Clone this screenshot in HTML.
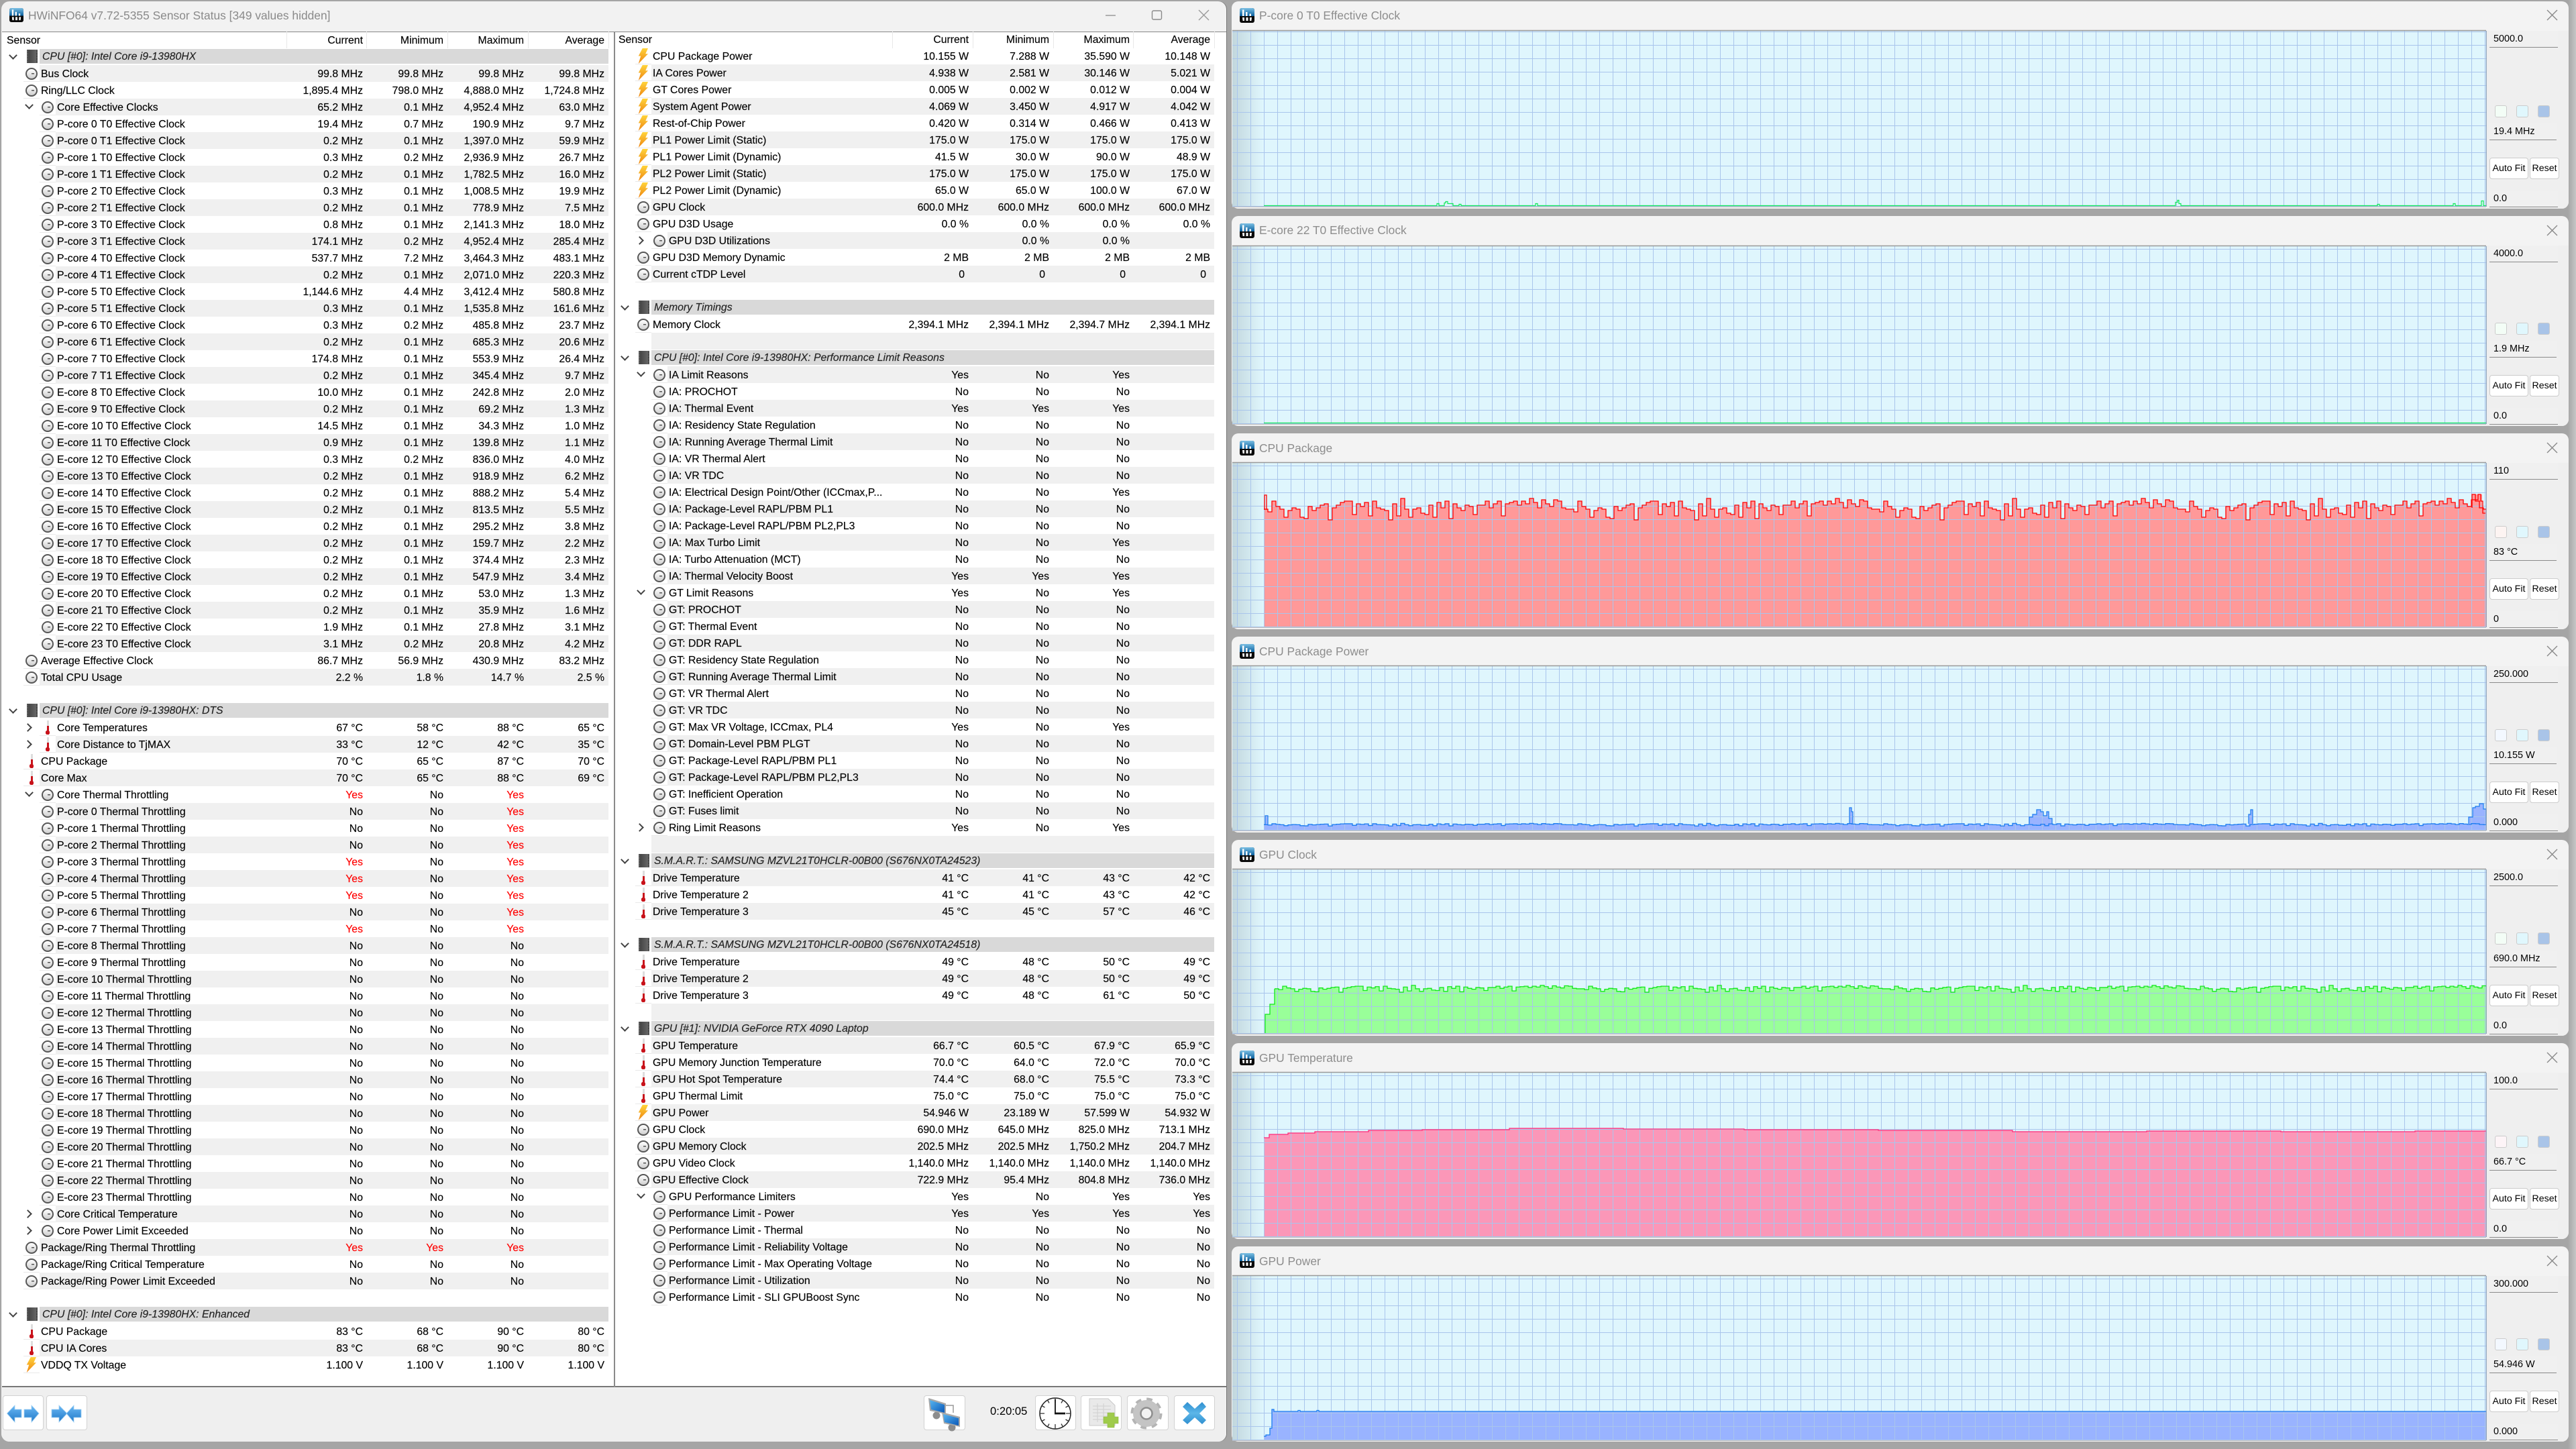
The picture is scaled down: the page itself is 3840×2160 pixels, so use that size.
<!DOCTYPE html>
<html><head><meta charset="utf-8"><title>HWiNFO64 Sensor Status</title>
<style>
html,body{margin:0;padding:0}
body{width:3840px;height:2160px;overflow:hidden;position:relative;background:linear-gradient(90deg,#a5a5a5 0,#a5a5a5 3828px,#c6c6c6 3840px);font:15.8px "Liberation Sans",sans-serif;color:#000}
.a{position:absolute}
#m{left:2px;top:2px;width:1826px;height:2147px;background:#f2f2f2;border-radius:12px;box-shadow:1px 0 0 #777}
#ls{left:3px;top:47px;width:1825px;height:2021px;background:#fff;border-top:1px solid #888;border-bottom:2px solid #777;box-sizing:border-box}
#bb{left:2px;top:2069px;width:1826px;height:80px;background:#efefef;border-radius:0 0 12px 12px}
.tt{position:absolute;font-size:17.4px;color:#8a8a8a;line-height:24px;white-space:nowrap}
.hh{position:absolute;width:100px;text-align:right;top:49px;line-height:24px;-webkit-text-stroke:.15px #000}
.sep{position:absolute;top:47px;height:25px;width:1px;background:#e8e8e8}
.p{position:absolute;-webkit-text-stroke:.15px currentColor}
.p p{margin:0;height:25px;position:relative;line-height:25px;white-space:nowrap}
.p p::before{content:"";position:absolute;left:59px;right:0;top:0;bottom:0}
.p p.l::before{left:83px}
.p p:nth-child(even)::before{background:#f0f0f0}
.p p.g::before{background:#d9d9d9;top:1px;bottom:2px}
.p b{font-weight:normal;position:absolute;left:61px;top:1px}
.p .l b{left:85px}
.p .g b{font-style:italic;left:63px;color:#222;top:0}
.p u{text-decoration:none;position:absolute;top:1px}
.p u:nth-of-type(1){right:366px}.p u:nth-of-type(2){right:246px}.p u:nth-of-type(3){right:126px}.p u:nth-of-type(4){right:6px}
.p u.y{color:#f00}
.c,.t,.o{background:linear-gradient(#e9e9e9,#e9e9e9) 35px 100%/24px 1px no-repeat}
.l.c,.l.t{background-position:59px 100%}
p.c::after,p.t::after,p.o::after,p.g::after{content:"";position:absolute}
p.c::after{left:38px;top:4px;width:14px;height:14px;border:2px solid #575757;border-radius:50%;background:linear-gradient(#555,#555) 7px 6px/4px 1.5px no-repeat,linear-gradient(#fff,#cfcfcf)}
p.l.c::after{left:62px}
p.t::after{left:44px;top:2px;width:6px;height:21px;background:radial-gradient(circle at 3px 18px,#c8131b 3px,transparent 3.5px),linear-gradient(#ddd 0,#ddd 8px,#c8131b 8px) 1.5px 0/3px 100% no-repeat}
p.l.t::after{left:68px}
p.o::after{left:39px;top:1px;width:15px;height:23px;clip-path:polygon(45% 0,100% 0,75% 36%,100% 36%,5% 100%,28% 50%,5% 50%);background:linear-gradient(#ffd43c,#ee8410)}
p.g::after{left:40px;top:2px;width:12px;height:20px;background:linear-gradient(90deg,#444,#666);border-left:2px dotted #555;border-right:2px dotted #555}
.p i{position:absolute;width:7px;height:7px;border-right:2.5px solid #444;border-bottom:2.5px solid #444}
i.d{left:39px;top:5px;transform:rotate(45deg)}
.g i.d{left:15px;top:6px}
i.r{left:37px;top:8px;transform:rotate(-45deg)}
.bt{position:absolute;top:2080px;height:52px;background:#fff;border:1px solid #d2d2d2;border-radius:4px;box-sizing:border-box}
.w{position:absolute;left:1836px;width:1993px;background:#f3f3f3;border-radius:10px;overflow:hidden}
.w .tt{left:41px;color:#8d8d8d}
.k{position:absolute;left:1871px;right:0;top:44px;bottom:0;background:#efefef;z-index:3}
.f{position:absolute;left:4px;width:102px;height:25px;background:#f0f0f0;border-bottom:1.5px solid #8a8a8a;box-sizing:border-box;font-size:14.4px;line-height:24px;padding-left:6px;white-space:nowrap}
.fv{width:100px}
.sw{position:absolute;width:18px;height:18px;border:1px solid #ccc;border-radius:3px;box-sizing:border-box}
.b1{position:absolute;height:32px;background:#fff;border:1px solid #ccc;border-radius:4px;box-sizing:border-box;font-size:14.2px;line-height:31px;text-align:center}
svg{position:absolute;left:0;top:0;z-index:2}
</style></head>
<body>
<div class="a" id="m"></div>
<div class="a" id="ls"></div>
<div class="a" id="bb"></div>
<div class="tt" style="left:42px;top:11px">HWiNFO64 v7.72-5355 Sensor Status [349 values hidden]</div>

<div class="hh" style="left:10px;text-align:left;width:auto">Sensor</div>
<div class="hh" style="left:441px">Current</div><div class="hh" style="left:561px">Minimum</div><div class="hh" style="left:681px">Maximum</div><div class="hh" style="left:801px">Average</div>
<div class="sep" style="left:427px"></div><div class="sep" style="left:546px"></div><div class="sep" style="left:667px"></div><div class="sep" style="left:787px"></div><div class="sep" style="left:907px"></div>
<div class="hh" style="left:922px;width:auto;text-align:left;top:48px">Sensor</div>
<div class="hh" style="left:1344px;top:48px">Current</div><div class="hh" style="left:1464px;top:48px">Minimum</div><div class="hh" style="left:1584px;top:48px">Maximum</div><div class="hh" style="left:1704px;top:48px">Average</div>
<div class="sep" style="left:1330px"></div><div class="sep" style="left:1450px"></div><div class="sep" style="left:1570px"></div><div class="sep" style="left:1689px"></div><div class="sep" style="left:1810px"></div>
<div class="a" style="left:915px;top:47px;width:2px;height:2021px;background:#8a8a8a"></div>

<div class="p" style="left:0;top:72px;width:907px">
<p class="g"><i class="d"></i><b>CPU [#0]: Intel Core i9-13980HX</b></p>
<p class="c"><b>Bus Clock</b><u>99.8 MHz</u><u>99.8 MHz</u><u>99.8 MHz</u><u>99.8 MHz</u></p>
<p class="c"><b>Ring/LLC Clock</b><u>1,895.4 MHz</u><u>798.0 MHz</u><u>4,888.0 MHz</u><u>1,724.8 MHz</u></p>
<p class="c l"><i class="d"></i><b>Core Effective Clocks</b><u>65.2 MHz</u><u>0.1 MHz</u><u>4,952.4 MHz</u><u>63.0 MHz</u></p>
<p class="c l"><b>P-core 0 T0 Effective Clock</b><u>19.4 MHz</u><u>0.7 MHz</u><u>190.9 MHz</u><u>9.7 MHz</u></p>
<p class="c l"><b>P-core 0 T1 Effective Clock</b><u>0.2 MHz</u><u>0.1 MHz</u><u>1,397.0 MHz</u><u>59.9 MHz</u></p>
<p class="c l"><b>P-core 1 T0 Effective Clock</b><u>0.3 MHz</u><u>0.2 MHz</u><u>2,936.9 MHz</u><u>26.7 MHz</u></p>
<p class="c l"><b>P-core 1 T1 Effective Clock</b><u>0.2 MHz</u><u>0.1 MHz</u><u>1,782.5 MHz</u><u>16.0 MHz</u></p>
<p class="c l"><b>P-core 2 T0 Effective Clock</b><u>0.3 MHz</u><u>0.1 MHz</u><u>1,008.5 MHz</u><u>19.9 MHz</u></p>
<p class="c l"><b>P-core 2 T1 Effective Clock</b><u>0.2 MHz</u><u>0.1 MHz</u><u>778.9 MHz</u><u>7.5 MHz</u></p>
<p class="c l"><b>P-core 3 T0 Effective Clock</b><u>0.8 MHz</u><u>0.1 MHz</u><u>2,141.3 MHz</u><u>18.0 MHz</u></p>
<p class="c l"><b>P-core 3 T1 Effective Clock</b><u>174.1 MHz</u><u>0.2 MHz</u><u>4,952.4 MHz</u><u>285.4 MHz</u></p>
<p class="c l"><b>P-core 4 T0 Effective Clock</b><u>537.7 MHz</u><u>7.2 MHz</u><u>3,464.3 MHz</u><u>483.1 MHz</u></p>
<p class="c l"><b>P-core 4 T1 Effective Clock</b><u>0.2 MHz</u><u>0.1 MHz</u><u>2,071.0 MHz</u><u>220.3 MHz</u></p>
<p class="c l"><b>P-core 5 T0 Effective Clock</b><u>1,144.6 MHz</u><u>4.4 MHz</u><u>3,412.4 MHz</u><u>580.8 MHz</u></p>
<p class="c l"><b>P-core 5 T1 Effective Clock</b><u>0.3 MHz</u><u>0.1 MHz</u><u>1,535.8 MHz</u><u>161.6 MHz</u></p>
<p class="c l"><b>P-core 6 T0 Effective Clock</b><u>0.3 MHz</u><u>0.2 MHz</u><u>485.8 MHz</u><u>23.7 MHz</u></p>
<p class="c l"><b>P-core 6 T1 Effective Clock</b><u>0.2 MHz</u><u>0.1 MHz</u><u>685.3 MHz</u><u>20.6 MHz</u></p>
<p class="c l"><b>P-core 7 T0 Effective Clock</b><u>174.8 MHz</u><u>0.1 MHz</u><u>553.9 MHz</u><u>26.4 MHz</u></p>
<p class="c l"><b>P-core 7 T1 Effective Clock</b><u>0.2 MHz</u><u>0.1 MHz</u><u>345.4 MHz</u><u>9.7 MHz</u></p>
<p class="c l"><b>E-core 8 T0 Effective Clock</b><u>10.0 MHz</u><u>0.1 MHz</u><u>242.8 MHz</u><u>2.0 MHz</u></p>
<p class="c l"><b>E-core 9 T0 Effective Clock</b><u>0.2 MHz</u><u>0.1 MHz</u><u>69.2 MHz</u><u>1.3 MHz</u></p>
<p class="c l"><b>E-core 10 T0 Effective Clock</b><u>14.5 MHz</u><u>0.1 MHz</u><u>34.3 MHz</u><u>1.0 MHz</u></p>
<p class="c l"><b>E-core 11 T0 Effective Clock</b><u>0.9 MHz</u><u>0.1 MHz</u><u>139.8 MHz</u><u>1.1 MHz</u></p>
<p class="c l"><b>E-core 12 T0 Effective Clock</b><u>0.3 MHz</u><u>0.2 MHz</u><u>836.0 MHz</u><u>4.0 MHz</u></p>
<p class="c l"><b>E-core 13 T0 Effective Clock</b><u>0.2 MHz</u><u>0.1 MHz</u><u>918.9 MHz</u><u>6.2 MHz</u></p>
<p class="c l"><b>E-core 14 T0 Effective Clock</b><u>0.2 MHz</u><u>0.1 MHz</u><u>888.2 MHz</u><u>5.4 MHz</u></p>
<p class="c l"><b>E-core 15 T0 Effective Clock</b><u>0.2 MHz</u><u>0.1 MHz</u><u>813.5 MHz</u><u>5.5 MHz</u></p>
<p class="c l"><b>E-core 16 T0 Effective Clock</b><u>0.2 MHz</u><u>0.1 MHz</u><u>295.2 MHz</u><u>3.8 MHz</u></p>
<p class="c l"><b>E-core 17 T0 Effective Clock</b><u>0.2 MHz</u><u>0.1 MHz</u><u>159.7 MHz</u><u>2.2 MHz</u></p>
<p class="c l"><b>E-core 18 T0 Effective Clock</b><u>0.2 MHz</u><u>0.1 MHz</u><u>374.4 MHz</u><u>2.3 MHz</u></p>
<p class="c l"><b>E-core 19 T0 Effective Clock</b><u>0.2 MHz</u><u>0.1 MHz</u><u>547.9 MHz</u><u>3.4 MHz</u></p>
<p class="c l"><b>E-core 20 T0 Effective Clock</b><u>0.2 MHz</u><u>0.1 MHz</u><u>53.0 MHz</u><u>1.3 MHz</u></p>
<p class="c l"><b>E-core 21 T0 Effective Clock</b><u>0.2 MHz</u><u>0.1 MHz</u><u>35.9 MHz</u><u>1.6 MHz</u></p>
<p class="c l"><b>E-core 22 T0 Effective Clock</b><u>1.9 MHz</u><u>0.1 MHz</u><u>27.8 MHz</u><u>3.1 MHz</u></p>
<p class="c l"><b>E-core 23 T0 Effective Clock</b><u>3.1 MHz</u><u>0.2 MHz</u><u>20.8 MHz</u><u>4.2 MHz</u></p>
<p class="c"><b>Average Effective Clock</b><u>86.7 MHz</u><u>56.9 MHz</u><u>430.9 MHz</u><u>83.2 MHz</u></p>
<p class="c"><b>Total CPU Usage</b><u>2.2 %</u><u>1.8 %</u><u>14.7 %</u><u>2.5 %</u></p>
<p></p>
<p class="g"><i class="d"></i><b>CPU [#0]: Intel Core i9-13980HX: DTS</b></p>
<p class="t l"><i class="r"></i><b>Core Temperatures</b><u>67 °C</u><u>58 °C</u><u>88 °C</u><u>65 °C</u></p>
<p class="t l"><i class="r"></i><b>Core Distance to TjMAX</b><u>33 °C</u><u>12 °C</u><u>42 °C</u><u>35 °C</u></p>
<p class="t"><b>CPU Package</b><u>70 °C</u><u>65 °C</u><u>87 °C</u><u>70 °C</u></p>
<p class="t"><b>Core Max</b><u>70 °C</u><u>65 °C</u><u>88 °C</u><u>69 °C</u></p>
<p class="c l"><i class="d"></i><b>Core Thermal Throttling</b><u class="y">Yes</u><u>No</u><u class="y">Yes</u></p>
<p class="c l"><b>P-core 0 Thermal Throttling</b><u>No</u><u>No</u><u class="y">Yes</u></p>
<p class="c l"><b>P-core 1 Thermal Throttling</b><u>No</u><u>No</u><u class="y">Yes</u></p>
<p class="c l"><b>P-core 2 Thermal Throttling</b><u>No</u><u>No</u><u class="y">Yes</u></p>
<p class="c l"><b>P-core 3 Thermal Throttling</b><u class="y">Yes</u><u>No</u><u class="y">Yes</u></p>
<p class="c l"><b>P-core 4 Thermal Throttling</b><u class="y">Yes</u><u>No</u><u class="y">Yes</u></p>
<p class="c l"><b>P-core 5 Thermal Throttling</b><u class="y">Yes</u><u>No</u><u class="y">Yes</u></p>
<p class="c l"><b>P-core 6 Thermal Throttling</b><u>No</u><u>No</u><u class="y">Yes</u></p>
<p class="c l"><b>P-core 7 Thermal Throttling</b><u class="y">Yes</u><u>No</u><u class="y">Yes</u></p>
<p class="c l"><b>E-core 8 Thermal Throttling</b><u>No</u><u>No</u><u>No</u></p>
<p class="c l"><b>E-core 9 Thermal Throttling</b><u>No</u><u>No</u><u>No</u></p>
<p class="c l"><b>E-core 10 Thermal Throttling</b><u>No</u><u>No</u><u>No</u></p>
<p class="c l"><b>E-core 11 Thermal Throttling</b><u>No</u><u>No</u><u>No</u></p>
<p class="c l"><b>E-core 12 Thermal Throttling</b><u>No</u><u>No</u><u>No</u></p>
<p class="c l"><b>E-core 13 Thermal Throttling</b><u>No</u><u>No</u><u>No</u></p>
<p class="c l"><b>E-core 14 Thermal Throttling</b><u>No</u><u>No</u><u>No</u></p>
<p class="c l"><b>E-core 15 Thermal Throttling</b><u>No</u><u>No</u><u>No</u></p>
<p class="c l"><b>E-core 16 Thermal Throttling</b><u>No</u><u>No</u><u>No</u></p>
<p class="c l"><b>E-core 17 Thermal Throttling</b><u>No</u><u>No</u><u>No</u></p>
<p class="c l"><b>E-core 18 Thermal Throttling</b><u>No</u><u>No</u><u>No</u></p>
<p class="c l"><b>E-core 19 Thermal Throttling</b><u>No</u><u>No</u><u>No</u></p>
<p class="c l"><b>E-core 20 Thermal Throttling</b><u>No</u><u>No</u><u>No</u></p>
<p class="c l"><b>E-core 21 Thermal Throttling</b><u>No</u><u>No</u><u>No</u></p>
<p class="c l"><b>E-core 22 Thermal Throttling</b><u>No</u><u>No</u><u>No</u></p>
<p class="c l"><b>E-core 23 Thermal Throttling</b><u>No</u><u>No</u><u>No</u></p>
<p class="c l"><i class="r"></i><b>Core Critical Temperature</b><u>No</u><u>No</u><u>No</u></p>
<p class="c l"><i class="r"></i><b>Core Power Limit Exceeded</b><u>No</u><u>No</u><u>No</u></p>
<p class="c"><b>Package/Ring Thermal Throttling</b><u class="y">Yes</u><u class="y">Yes</u><u class="y">Yes</u></p>
<p class="c"><b>Package/Ring Critical Temperature</b><u>No</u><u>No</u><u>No</u></p>
<p class="c"><b>Package/Ring Power Limit Exceeded</b><u>No</u><u>No</u><u>No</u></p>
<p></p>
<p class="g"><i class="d"></i><b>CPU [#0]: Intel Core i9-13980HX: Enhanced</b></p>
<p class="t"><b>CPU Package</b><u>83 °C</u><u>68 °C</u><u>90 °C</u><u>80 °C</u></p>
<p class="t"><b>CPU IA Cores</b><u>83 °C</u><u>68 °C</u><u>90 °C</u><u>80 °C</u></p>
<p class="o"><b>VDDQ TX Voltage</b><u>1.100 V</u><u>1.100 V</u><u>1.100 V</u><u>1.100 V</u></p>
</div>

<div class="p" style="left:912px;top:71px;width:898px">
<p class="o"><b>CPU Package Power</b><u>10.155 W</u><u>7.288 W</u><u>35.590 W</u><u>10.148 W</u></p>
<p class="o"><b>IA Cores Power</b><u>4.938 W</u><u>2.581 W</u><u>30.146 W</u><u>5.021 W</u></p>
<p class="o"><b>GT Cores Power</b><u>0.005 W</u><u>0.002 W</u><u>0.012 W</u><u>0.004 W</u></p>
<p class="o"><b>System Agent Power</b><u>4.069 W</u><u>3.450 W</u><u>4.917 W</u><u>4.042 W</u></p>
<p class="o"><b>Rest-of-Chip Power</b><u>0.420 W</u><u>0.314 W</u><u>0.466 W</u><u>0.413 W</u></p>
<p class="o"><b>PL1 Power Limit (Static)</b><u>175.0 W</u><u>175.0 W</u><u>175.0 W</u><u>175.0 W</u></p>
<p class="o"><b>PL1 Power Limit (Dynamic)</b><u>41.5 W</u><u>30.0 W</u><u>90.0 W</u><u>48.9 W</u></p>
<p class="o"><b>PL2 Power Limit (Static)</b><u>175.0 W</u><u>175.0 W</u><u>175.0 W</u><u>175.0 W</u></p>
<p class="o"><b>PL2 Power Limit (Dynamic)</b><u>65.0 W</u><u>65.0 W</u><u>100.0 W</u><u>67.0 W</u></p>
<p class="c"><b>GPU Clock</b><u>600.0 MHz</u><u>600.0 MHz</u><u>600.0 MHz</u><u>600.0 MHz</u></p>
<p class="c"><b>GPU D3D Usage</b><u>0.0 %</u><u>0.0 %</u><u>0.0 %</u><u>0.0 %</u></p>
<p class="c l"><i class="r"></i><b>GPU D3D Utilizations</b><u></u><u>0.0 %</u><u>0.0 %</u></p>
<p class="c"><b>GPU D3D Memory Dynamic</b><u>2 MB</u><u>2 MB</u><u>2 MB</u><u>2 MB</u></p>
<p class="c"><b>Current cTDP Level</b><u style="right:372px">0</u><u style="right:252px">0</u><u style="right:132px">0</u><u style="right:12px">0</u></p>
<p></p>
<p class="g"><i class="d"></i><b>Memory Timings</b></p>
<p class="c"><b>Memory Clock</b><u>2,394.1 MHz</u><u>2,394.1 MHz</u><u>2,394.7 MHz</u><u>2,394.1 MHz</u></p>
<p></p>
<p class="g"><i class="d"></i><b>CPU [#0]: Intel Core i9-13980HX: Performance Limit Reasons</b></p>
<p class="c l"><i class="d"></i><b>IA Limit Reasons</b><u>Yes</u><u>No</u><u>Yes</u></p>
<p class="c l"><b>IA: PROCHOT</b><u>No</u><u>No</u><u>No</u></p>
<p class="c l"><b>IA: Thermal Event</b><u>Yes</u><u>Yes</u><u>Yes</u></p>
<p class="c l"><b>IA: Residency State Regulation</b><u>No</u><u>No</u><u>No</u></p>
<p class="c l"><b>IA: Running Average Thermal Limit</b><u>No</u><u>No</u><u>No</u></p>
<p class="c l"><b>IA: VR Thermal Alert</b><u>No</u><u>No</u><u>No</u></p>
<p class="c l"><b>IA: VR TDC</b><u>No</u><u>No</u><u>No</u></p>
<p class="c l"><b>IA: Electrical Design Point/Other (ICCmax,P...</b><u>No</u><u>No</u><u>Yes</u></p>
<p class="c l"><b>IA: Package-Level RAPL/PBM PL1</b><u>No</u><u>No</u><u>No</u></p>
<p class="c l"><b>IA: Package-Level RAPL/PBM PL2,PL3</b><u>No</u><u>No</u><u>No</u></p>
<p class="c l"><b>IA: Max Turbo Limit</b><u>No</u><u>No</u><u>Yes</u></p>
<p class="c l"><b>IA: Turbo Attenuation (MCT)</b><u>No</u><u>No</u><u>No</u></p>
<p class="c l"><b>IA: Thermal Velocity Boost</b><u>Yes</u><u>Yes</u><u>Yes</u></p>
<p class="c l"><i class="d"></i><b>GT Limit Reasons</b><u>Yes</u><u>No</u><u>Yes</u></p>
<p class="c l"><b>GT: PROCHOT</b><u>No</u><u>No</u><u>No</u></p>
<p class="c l"><b>GT: Thermal Event</b><u>No</u><u>No</u><u>No</u></p>
<p class="c l"><b>GT: DDR RAPL</b><u>No</u><u>No</u><u>No</u></p>
<p class="c l"><b>GT: Residency State Regulation</b><u>No</u><u>No</u><u>No</u></p>
<p class="c l"><b>GT: Running Average Thermal Limit</b><u>No</u><u>No</u><u>No</u></p>
<p class="c l"><b>GT: VR Thermal Alert</b><u>No</u><u>No</u><u>No</u></p>
<p class="c l"><b>GT: VR TDC</b><u>No</u><u>No</u><u>No</u></p>
<p class="c l"><b>GT: Max VR Voltage, ICCmax, PL4</b><u>Yes</u><u>No</u><u>Yes</u></p>
<p class="c l"><b>GT: Domain-Level PBM PLGT</b><u>No</u><u>No</u><u>No</u></p>
<p class="c l"><b>GT: Package-Level RAPL/PBM PL1</b><u>No</u><u>No</u><u>No</u></p>
<p class="c l"><b>GT: Package-Level RAPL/PBM PL2,PL3</b><u>No</u><u>No</u><u>No</u></p>
<p class="c l"><b>GT: Inefficient Operation</b><u>No</u><u>No</u><u>No</u></p>
<p class="c l"><b>GT: Fuses limit</b><u>No</u><u>No</u><u>No</u></p>
<p class="c l"><i class="r"></i><b>Ring Limit Reasons</b><u>Yes</u><u>No</u><u>Yes</u></p>
<p></p>
<p class="g"><i class="d"></i><b>S.M.A.R.T.: SAMSUNG MZVL21T0HCLR-00B00 (S676NX0TA24523)</b></p>
<p class="t"><b>Drive Temperature</b><u>41 °C</u><u>41 °C</u><u>43 °C</u><u>42 °C</u></p>
<p class="t"><b>Drive Temperature 2</b><u>41 °C</u><u>41 °C</u><u>43 °C</u><u>42 °C</u></p>
<p class="t"><b>Drive Temperature 3</b><u>45 °C</u><u>45 °C</u><u>57 °C</u><u>46 °C</u></p>
<p></p>
<p class="g"><i class="d"></i><b>S.M.A.R.T.: SAMSUNG MZVL21T0HCLR-00B00 (S676NX0TA24518)</b></p>
<p class="t"><b>Drive Temperature</b><u>49 °C</u><u>48 °C</u><u>50 °C</u><u>49 °C</u></p>
<p class="t"><b>Drive Temperature 2</b><u>49 °C</u><u>48 °C</u><u>50 °C</u><u>49 °C</u></p>
<p class="t"><b>Drive Temperature 3</b><u>49 °C</u><u>48 °C</u><u>61 °C</u><u>50 °C</u></p>
<p></p>
<p class="g"><i class="d"></i><b>GPU [#1]: NVIDIA GeForce RTX 4090 Laptop</b></p>
<p class="t"><b>GPU Temperature</b><u>66.7 °C</u><u>60.5 °C</u><u>67.9 °C</u><u>65.9 °C</u></p>
<p class="t"><b>GPU Memory Junction Temperature</b><u>70.0 °C</u><u>64.0 °C</u><u>72.0 °C</u><u>70.0 °C</u></p>
<p class="t"><b>GPU Hot Spot Temperature</b><u>74.4 °C</u><u>68.0 °C</u><u>75.5 °C</u><u>73.3 °C</u></p>
<p class="t"><b>GPU Thermal Limit</b><u>75.0 °C</u><u>75.0 °C</u><u>75.0 °C</u><u>75.0 °C</u></p>
<p class="o"><b>GPU Power</b><u>54.946 W</u><u>23.189 W</u><u>57.599 W</u><u>54.932 W</u></p>
<p class="c"><b>GPU Clock</b><u>690.0 MHz</u><u>645.0 MHz</u><u>825.0 MHz</u><u>713.1 MHz</u></p>
<p class="c"><b>GPU Memory Clock</b><u>202.5 MHz</u><u>202.5 MHz</u><u>1,750.2 MHz</u><u>204.7 MHz</u></p>
<p class="c"><b>GPU Video Clock</b><u>1,140.0 MHz</u><u>1,140.0 MHz</u><u>1,140.0 MHz</u><u>1,140.0 MHz</u></p>
<p class="c"><b>GPU Effective Clock</b><u>722.9 MHz</u><u>95.4 MHz</u><u>804.8 MHz</u><u>736.0 MHz</u></p>
<p class="c l"><i class="d"></i><b>GPU Performance Limiters</b><u>Yes</u><u>No</u><u>Yes</u><u>Yes</u></p>
<p class="c l"><b>Performance Limit - Power</b><u>Yes</u><u>Yes</u><u>Yes</u><u>Yes</u></p>
<p class="c l"><b>Performance Limit - Thermal</b><u>No</u><u>No</u><u>No</u><u>No</u></p>
<p class="c l"><b>Performance Limit - Reliability Voltage</b><u>No</u><u>No</u><u>No</u><u>No</u></p>
<p class="c l"><b>Performance Limit - Max Operating Voltage</b><u>No</u><u>No</u><u>No</u><u>No</u></p>
<p class="c l"><b>Performance Limit - Utilization</b><u>No</u><u>No</u><u>No</u><u>No</u></p>
<p class="c l"><b>Performance Limit - SLI GPUBoost Sync</b><u>No</u><u>No</u><u>No</u><u>No</u></p>
</div>

<div class="bt" style="left:4px;width:61px"></div>
<div class="bt" style="left:69px;width:61px"></div>
<div class="bt" style="left:1377px;width:62px"></div>
<div class="bt" style="left:1543px;width:61px"></div>
<div class="bt" style="left:1611px;width:61px"></div>
<div class="bt" style="left:1680px;width:62px"></div>
<div class="bt" style="left:1750px;width:61px"></div>
<div class="a" style="left:1476px;top:2092px;font-size:16.6px;line-height:24px">0:20:05</div>

<div class="w" style="top:2px;height:309px"><div class="tt" style="top:9px">P-core 0 T0 Effective Clock</div>
<div class="k"><div class="f" style="top:0">5000.0</div><div class="sw" style="left:12px;bottom:136px;background:#f3fdf6"></div><div class="sw" style="left:44px;bottom:136px;background:#e0f7fd"></div><div class="sw" style="left:76px;bottom:136px;background:#a9c4e8"></div><div class="f fv" style="bottom:102px">19.4 MHz</div><div class="b1" style="left:4px;width:58px;bottom:44px">Auto Fit</div><div class="b1" style="left:64px;width:44px;bottom:44px">Reset</div><div class="f" style="bottom:2px">0.0</div></div></div>
<div class="w" style="top:322px;height:313px"><div class="tt" style="top:9px">E-core 22 T0 Effective Clock</div>
<div class="k"><div class="f" style="top:0">4000.0</div><div class="sw" style="left:12px;bottom:136px;background:#f3fdf6"></div><div class="sw" style="left:44px;bottom:136px;background:#e0f7fd"></div><div class="sw" style="left:76px;bottom:136px;background:#a9c4e8"></div><div class="f fv" style="bottom:102px">1.9 MHz</div><div class="b1" style="left:4px;width:58px;bottom:44px">Auto Fit</div><div class="b1" style="left:64px;width:44px;bottom:44px">Reset</div><div class="f" style="bottom:2px">0.0</div></div></div>
<div class="w" style="top:646px;height:292px"><div class="tt" style="top:10px">CPU Package</div>
<div class="k"><div class="f" style="top:0">110</div><div class="sw" style="left:12px;bottom:136px;background:#fdf4f2"></div><div class="sw" style="left:44px;bottom:136px;background:#e0f7fd"></div><div class="sw" style="left:76px;bottom:136px;background:#a9c4e8"></div><div class="f fv" style="bottom:102px">83 °C</div><div class="b1" style="left:4px;width:58px;bottom:44px">Auto Fit</div><div class="b1" style="left:64px;width:44px;bottom:44px">Reset</div><div class="f" style="bottom:2px">0</div></div></div>
<div class="w" style="top:949px;height:292px"><div class="tt" style="top:10px">CPU Package Power</div>
<div class="k"><div class="f" style="top:0">250.000</div><div class="sw" style="left:12px;bottom:136px;background:#f3f8ff"></div><div class="sw" style="left:44px;bottom:136px;background:#e0f7fd"></div><div class="sw" style="left:76px;bottom:136px;background:#a9c4e8"></div><div class="f fv" style="bottom:102px">10.155 W</div><div class="b1" style="left:4px;width:58px;bottom:44px">Auto Fit</div><div class="b1" style="left:64px;width:44px;bottom:44px">Reset</div><div class="f" style="bottom:2px">0.000</div></div></div>
<div class="w" style="top:1252px;height:292px"><div class="tt" style="top:10px">GPU Clock</div>
<div class="k"><div class="f" style="top:0">2500.0</div><div class="sw" style="left:12px;bottom:136px;background:#f3fdf6"></div><div class="sw" style="left:44px;bottom:136px;background:#e0f7fd"></div><div class="sw" style="left:76px;bottom:136px;background:#a9c4e8"></div><div class="f fv" style="bottom:102px">690.0 MHz</div><div class="b1" style="left:4px;width:58px;bottom:44px">Auto Fit</div><div class="b1" style="left:64px;width:44px;bottom:44px">Reset</div><div class="f" style="bottom:2px">0.0</div></div></div>
<div class="w" style="top:1555px;height:292px"><div class="tt" style="top:10px">GPU Temperature</div>
<div class="k"><div class="f" style="top:0">100.0</div><div class="sw" style="left:12px;bottom:136px;background:#fdf4f7"></div><div class="sw" style="left:44px;bottom:136px;background:#e0f7fd"></div><div class="sw" style="left:76px;bottom:136px;background:#a9c4e8"></div><div class="f fv" style="bottom:102px">66.7 °C</div><div class="b1" style="left:4px;width:58px;bottom:44px">Auto Fit</div><div class="b1" style="left:64px;width:44px;bottom:44px">Reset</div><div class="f" style="bottom:2px">0.0</div></div></div>
<div class="w" style="top:1858px;height:291px"><div class="tt" style="top:10px">GPU Power</div>
<div class="k"><div class="f" style="top:0">300.000</div><div class="sw" style="left:12px;bottom:136px;background:#f3f8ff"></div><div class="sw" style="left:44px;bottom:136px;background:#e0f7fd"></div><div class="sw" style="left:76px;bottom:136px;background:#a9c4e8"></div><div class="f fv" style="bottom:102px">54.946 W</div><div class="b1" style="left:4px;width:58px;bottom:44px">Auto Fit</div><div class="b1" style="left:64px;width:44px;bottom:44px">Reset</div><div class="f" style="bottom:2px">0.000</div></div></div>

<svg width="3840" height="2160" viewBox="0 0 3840 2160" xmlns="http://www.w3.org/2000/svg">
<defs>
<pattern id="v" x="1904" y="0" width="20" height="10" patternUnits="userSpaceOnUse"><rect width="1" height="10" fill="#a9c5ec"/></pattern>
<pattern id="h1" x="0" y="7" width="10" height="20" patternUnits="userSpaceOnUse"><rect width="10" height="1" fill="#a9c5ec"/></pattern>
<pattern id="h2" x="0" y="11" width="10" height="20" patternUnits="userSpaceOnUse"><rect width="10" height="1" fill="#a9c5ec"/></pattern>
<pattern id="h3" x="0" y="14" width="10" height="20" patternUnits="userSpaceOnUse"><rect width="10" height="1" fill="#a9c5ec"/></pattern>
<pattern id="h4" x="0" y="17" width="10" height="20" patternUnits="userSpaceOnUse"><rect width="10" height="1" fill="#a9c5ec"/></pattern>
<pattern id="h5" x="0" y="0" width="10" height="20" patternUnits="userSpaceOnUse"><rect width="10" height="1" fill="#a9c5ec"/></pattern>
<pattern id="h6" x="0" y="3" width="10" height="20" patternUnits="userSpaceOnUse"><rect width="10" height="1" fill="#a9c5ec"/></pattern>
<pattern id="h7" x="0" y="6" width="10" height="20" patternUnits="userSpaceOnUse"><rect width="10" height="1" fill="#a9c5ec"/></pattern>
<linearGradient id="sh" x1="0" x2="1" y1="0" y2="0"><stop offset="0" stop-color="#b8ccd2" stop-opacity=".75"/><stop offset="1" stop-color="#b8ccd2" stop-opacity="0"/></linearGradient>
<linearGradient id="hb" x1="0" x2="0" y1="0" y2="1"><stop offset="0" stop-color="#7cc0e4"/><stop offset="1" stop-color="#0a5f9e"/></linearGradient>
<linearGradient id="ab" x1="0" x2="0" y1="0" y2="1"><stop offset="0" stop-color="#6ab8f4"/><stop offset="1" stop-color="#1f78c8"/></linearGradient>
<linearGradient id="sc" x1="0" x2="1" y1="0" y2="1"><stop offset="0" stop-color="#59b6f0"/><stop offset="1" stop-color="#0a58b8"/></linearGradient>
<linearGradient id="xb" x1="0" x2="0" y1="0" y2="1"><stop offset="0" stop-color="#2f8fd0"/><stop offset=".5" stop-color="#5cb6e8"/><stop offset="1" stop-color="#2f8fd0"/></linearGradient>
<symbol id="hw" viewBox="0 0 22 22"><rect width="22" height="22" rx="3" fill="#0a0a0a"/><path d="M0 3a3 3 0 0 1 3-3h16a3 3 0 0 1 3 3v9H0z" fill="url(#hb)"/><path d="M4 2.500h2.500V12H4zM9 6h2.500v6H9zM14.500 8.500H17V12h-2.500zM4 14h3v5H4.600zM9.500 14h3v5h-3zM15 14h3l-.6 5H15z" fill="#fff"/></symbol>
<path id="nf" vector-effect="non-scaling-stroke" d="M0 0V-22h6V-18h6V-34h6V-26h6V-22h6V-10h6V-20h6V-24h6V-22h6V-10h6V-8h6V-26h6V-20h6V-24h6V-28h6V-30h6V-6h6V-24h6V-28h6V-32h6V-34h6V-34h6V-14h6V-30h6V-26h6V-32h6V-12h6V-34h6V-24h6V-22h6V-20h6V-6h6V-30h6V-12h6V-38h6V-22h6V-10h6V-22h6V-24h6V-16h6V-14h6V-28h6V-10h6V-32h6V-24h6V-34h6V-8h6V-30h6V-24h6V-20h6V-28h6V-26h6V-14h6V-28h6V-28h6V-34h6V-24h6V-30h6V-34h6V-12h6V-30h6V-32h6V-34h6V-28h6V-34h6V-30h6V-38h6V-32h6V-24h6V-36h6V-30h6V-26h6V-36h6V-34h6V-24h6V-22h6V0Z"/>
<path id="nl" vector-effect="non-scaling-stroke" fill="none" d="M0 -22h6V-18h6V-34h6V-26h6V-22h6V-10h6V-20h6V-24h6V-22h6V-10h6V-8h6V-26h6V-20h6V-24h6V-28h6V-30h6V-6h6V-24h6V-28h6V-32h6V-34h6V-34h6V-14h6V-30h6V-26h6V-32h6V-12h6V-34h6V-24h6V-22h6V-20h6V-6h6V-30h6V-12h6V-38h6V-22h6V-10h6V-22h6V-24h6V-16h6V-14h6V-28h6V-10h6V-32h6V-24h6V-34h6V-8h6V-30h6V-24h6V-20h6V-28h6V-26h6V-14h6V-28h6V-28h6V-34h6V-24h6V-30h6V-34h6V-12h6V-30h6V-32h6V-34h6V-28h6V-34h6V-30h6V-38h6V-32h6V-24h6V-36h6V-30h6V-26h6V-36h6V-34h6V-24h6V-22h6"/>
</defs>

<rect x="1837" y="46" width="1869" height="262" fill="#dff6fd"/><rect x="1837" y="46" width="46" height="262" fill="url(#sh)"/>
<rect x="1837" y="46" width="1869" height="262" fill="url(#v)"/><rect x="1837" y="46" width="1869" height="262" fill="url(#h1)"/>
<path d="M1884 306.500H2142v-3h3v3h8v-4h2v-2h3v3h8v3h9v-2h3v2H2289v-3h3v3H3243v-5h3v-3h2v5h3v3H3544v-2h3v2H3657v-3h3v3H3699v-7h3v7H3706" fill="none" stroke="#12e85a" stroke-width="1.200"/>

<rect x="1837" y="367" width="1869" height="265" fill="#dff6fd"/><rect x="1837" y="367" width="46" height="265" fill="url(#sh)"/>
<rect x="1837" y="367" width="1869" height="265" fill="url(#v)"/><rect x="1837" y="367" width="1869" height="265" fill="url(#h2)"/>
<path d="M1884 630.500H3706" fill="none" stroke="#12e85a" stroke-width="1.200"/>

<rect x="1837" y="690" width="1869" height="245" fill="#dff6fd"/><rect x="1837" y="690" width="46" height="245" fill="url(#sh)"/>
<g transform="translate(1884,781)" fill="#ff9999"><use href="#nf"/><use href="#nf" x="456"/><use href="#nf" x="912"/><use href="#nf" x="1368"/></g>
<rect x="1884" y="781" width="1822" height="154" fill="#ff9999"/>
<rect x="3685" y="737" width="15" height="44" fill="#ff9999"/>
<rect x="1837" y="690" width="1869" height="245" fill="url(#v)"/><rect x="1837" y="690" width="1869" height="245" fill="url(#h3)"/>
<g transform="translate(1884,781)" stroke="#ff0000" stroke-width="1.300"><use href="#nl"/><use href="#nl" x="456"/><use href="#nl" x="912"/><use href="#nl" x="1368"/></g>
<path d="M1885 760V738h3v22M3685 757V737h5v8h4v-8h4v10h3v18h4" fill="none" stroke="#f00" stroke-width="1.300"/>

<rect x="1837" y="993" width="1869" height="245" fill="#dff6fd"/><rect x="1837" y="993" width="46" height="245" fill="url(#sh)"/>
<g transform="translate(1884,1232) scale(1,.12)" fill="#99b3ff"><use href="#nf"/><use href="#nf" x="456"/><use href="#nf" x="912"/><use href="#nf" x="1368"/></g>
<rect x="1884" y="1232" width="1822" height="6" fill="#99b3ff"/>
<path d="M1886 1232V1216h4v16ZM2757 1232v-28h3v6h2v22ZM3025 1232v-14h5v-4h6v-7h6v3h4v6h5v-6h3v10h5v12ZM3352 1232v-18h3v-7h3v25ZM3680 1232v-14h6v-14h4v-2h6v-4h6v8h4v26Z" fill="#99b3ff"/>
<rect x="1837" y="993" width="1869" height="245" fill="url(#v)"/><rect x="1837" y="993" width="1869" height="245" fill="url(#h4)"/>
<g transform="translate(1884,1232) scale(1,.12)" stroke="#1a7cf0" stroke-width="1.300"><use href="#nl"/><use href="#nl" x="456"/><use href="#nl" x="912"/><use href="#nl" x="1368"/></g>
<path d="M1886 1230V1216h4v14M2757 1228v-24h3v6h2v18M3025 1228v-10h5v-4h6v-7h6v3h4v6h5v-6h3v10h5v8M3352 1228v-14h3v-7h3v21M3680 1228v-10h6v-14h4v-2h6v-4h6v8h4v22" fill="none" stroke="#1a7cf0" stroke-width="1.200"/>

<rect x="1837" y="1296" width="1869" height="245" fill="#dff6fd"/><rect x="1837" y="1296" width="46" height="245" fill="url(#sh)"/>
<g transform="translate(1900,1481) scale(1,.32)" fill="#99ff99"><use href="#nf"/><use href="#nf" x="456"/><use href="#nf" x="912"/><use href="#nf" x="1368"/></g>
<rect x="1900" y="1481" width="1806" height="60" fill="#99ff99"/>
<path d="M1886 1541V1512h7V1497h7V1541Z" fill="#99ff99"/>
<rect x="1837" y="1296" width="1869" height="245" fill="url(#v)"/><rect x="1837" y="1296" width="1869" height="245" fill="url(#h5)"/>
<g transform="translate(1900,1481) scale(1,.32)" stroke="#12e81a" stroke-width="1.300"><use href="#nl"/><use href="#nl" x="456"/><use href="#nl" x="912"/><use href="#nl" x="1368"/></g>
<path d="M1886 1540V1512h7V1497h7V1474" fill="none" stroke="#12e81a" stroke-width="1.300"/>

<rect x="1837" y="1599" width="1869" height="245" fill="#dff6fd"/><rect x="1837" y="1599" width="46" height="245" fill="url(#sh)"/>
<path d="M1884 1844V1696H1892V1691H1920V1689H1960V1687H2040V1685H2120V1684H2250V1682H2420V1683H2600V1684H2800V1685H3000V1687H3200V1686H3400V1687H3600V1686H3706V1844Z" fill="#fb97b8"/>
<rect x="1837" y="1599" width="1869" height="245" fill="url(#v)"/><rect x="1837" y="1599" width="1869" height="245" fill="url(#h6)"/>
<path d="M1884 1696H1892V1691H1920V1689H1960V1687H2040V1685H2120V1684H2250V1682H2420V1683H2600V1684H2800V1685H3000V1687H3200V1686H3400V1687H3600V1686H3706" fill="none" stroke="#ff2a78" stroke-width="1.300"/>

<rect x="1837" y="1902" width="1869" height="245" fill="#dff6fd"/><rect x="1837" y="1902" width="46" height="245" fill="url(#sh)"/>
<path d="M1884 2147V2141H1887V2139H1893V2129H1896V2101H1899V2104H3706V2147Z" fill="#99b3ff"/>
<rect x="1837" y="1902" width="1869" height="245" fill="url(#v)"/><rect x="1837" y="1902" width="1869" height="245" fill="url(#h7)"/>
<path d="M1884 2141H1887V2139H1893V2129H1896V2101H1899V2104H1935v-1.500h3v1.500H1963v-1.500h3v1.500H3706" fill="none" stroke="#1a7cf0" stroke-width="1.300"/>

<path d="M1837 45.500H3706M1837 366.500H3706M1837 689.500H3706M1837 992.500H3706M1837 1295.500H3706M1837 1598.500H3706M1837 1901.500H3706" stroke="#9a9a9a" stroke-width="1.500" fill="none"/>
<path d="M3706.500 46V308M3706.500 367V632M3706.500 690V935M3706.500 993V1238M3706.500 1296V1541M3706.500 1599V1844M3706.500 1902V2147" stroke="#93a6bd" stroke-width="1.500" fill="none"/>
<path d="M1837 308.500H3706M1837 632.500H3706M1837 935.500H3706M1837 1238.500H3706M1837 1541.500H3706M1837 1844.500H3706M1837 2147.500H3706" stroke="#bdbdbd" stroke-width="1" fill="none"/>

<use href="#hw" x="14" y="12" width="21" height="21"/>
<use href="#hw" x="1848" y="12" width="22" height="22"/><use href="#hw" x="1848" y="333" width="22" height="22"/><use href="#hw" x="1848" y="657" width="22" height="22"/><use href="#hw" x="1848" y="960" width="22" height="22"/><use href="#hw" x="1848" y="1263" width="22" height="22"/><use href="#hw" x="1848" y="1566" width="22" height="22"/><use href="#hw" x="1848" y="1868" width="22" height="22"/>

<path d="M3797 15l15 15m0-15l-15 15M3797 336l15 15m0-15l-15 15M3797 660l15 15m0-15l-15 15M3797 963l15 15m0-15l-15 15M3797 1266l15 15m0-15l-15 15M3797 1569l15 15m0-15l-15 15M3797 1872l15 15m0-15l-15 15" stroke="#8a8a8a" stroke-width="1.400" fill="none"/>
<path d="M1648 23h15M1787 15l15 15m0-15l-15 15" stroke="#9a9a9a" stroke-width="1.400" fill="none"/>
<rect x="1717.500" y="16" width="14" height="13" rx="2" fill="none" stroke="#8a8a8a" stroke-width="1.400"/>

<path d="M10.500 2107L22 2095V2101H32V2113H22V2120Z" fill="url(#ab)" stroke="#9fd0f4" stroke-width=".8"/>
<path d="M58 2107L47 2095V2101H36V2113H47V2120Z" fill="url(#ab)" stroke="#9fd0f4" stroke-width=".8"/>
<path d="M100 2107L88 2095V2101H77V2113H88V2120Z" fill="url(#ab)" stroke="#9fd0f4" stroke-width=".8"/>
<path d="M99 2107L110 2095V2101H121V2113H110V2120Z" fill="url(#ab)" stroke="#9fd0f4" stroke-width=".8"/>

<path d="M1401 2095H1421V2106" fill="none" stroke="#9a9a9a" stroke-width="1.500"/>
<circle cx="1396" cy="2110" r="5.500" fill="#8d8d8d"/><circle cx="1419" cy="2128" r="5.500" fill="#8d8d8d"/>
<path d="M1384 2084L1410 2092V2108L1386 2103Z" fill="#a8a8a8"/><path d="M1386 2087L1408 2094V2106L1388 2101Z" fill="url(#sc)"/>
<path d="M1404 2105L1431 2112V2127L1407 2122Z" fill="#a8a8a8"/><path d="M1406 2108L1429 2114V2125L1408 2120Z" fill="url(#sc)"/>

<circle cx="1573" cy="2107" r="23" fill="#fff" stroke="#222" stroke-width="1.500"/>
<path d="M1573 2084v7M1573 2123v7M1550 2107h7M1589 2107h7M1561.500 2087l2.500 4.500M1584.500 2087l-2.500 4.500M1561.500 2127l2.500-4.500M1584.500 2127l-2.500-4.500M1553 2095.500l4.500 2.500M1593 2095.500l-4.500 2.500M1553 2118.500l4.500-2.500M1593 2118.500l-4.500-2.500" stroke="#333" stroke-width="1.300" fill="none"/>
<path d="M1573 2107V2086" stroke="#111" stroke-width="1.800" fill="none"/><path d="M1572 2107H1588" stroke="#111" stroke-width="2.800" fill="none"/>

<path d="M1624 2085H1652L1662 2095V2125H1624Z" fill="#e9e9e9" stroke="#c9c9c9"/>
<path d="M1629 2096h27M1629 2101h27M1629 2106h27M1629 2111h27M1629 2116h27M1636 2092v28M1645 2092v28" stroke="#cfcfcf" stroke-width="1" fill="none"/>
<path d="M1651 2106H1661V2112H1667V2122H1661V2128H1651V2122H1645V2112H1651Z" fill="#9fcb4b" stroke="#8cb83f" stroke-width=".6"/>

<circle cx="1709" cy="2107" r="21" fill="none" stroke="#b4b4b4" stroke-width="5" stroke-dasharray="8.500 8"/>
<circle cx="1709" cy="2107" r="14" fill="none" stroke="#c4c4c4" stroke-width="12"/>
<circle cx="1709" cy="2107" r="8.500" fill="#f2f2f2" stroke="#8e8e8e" stroke-width="2.500"/>

<path d="M1763 2097L1770 2090L1781 2100L1792 2090L1798 2097L1788 2107L1798 2117L1792 2123L1781 2113L1770 2123L1763 2117L1773 2107Z" fill="url(#xb)"/>
</svg>
</body></html>
